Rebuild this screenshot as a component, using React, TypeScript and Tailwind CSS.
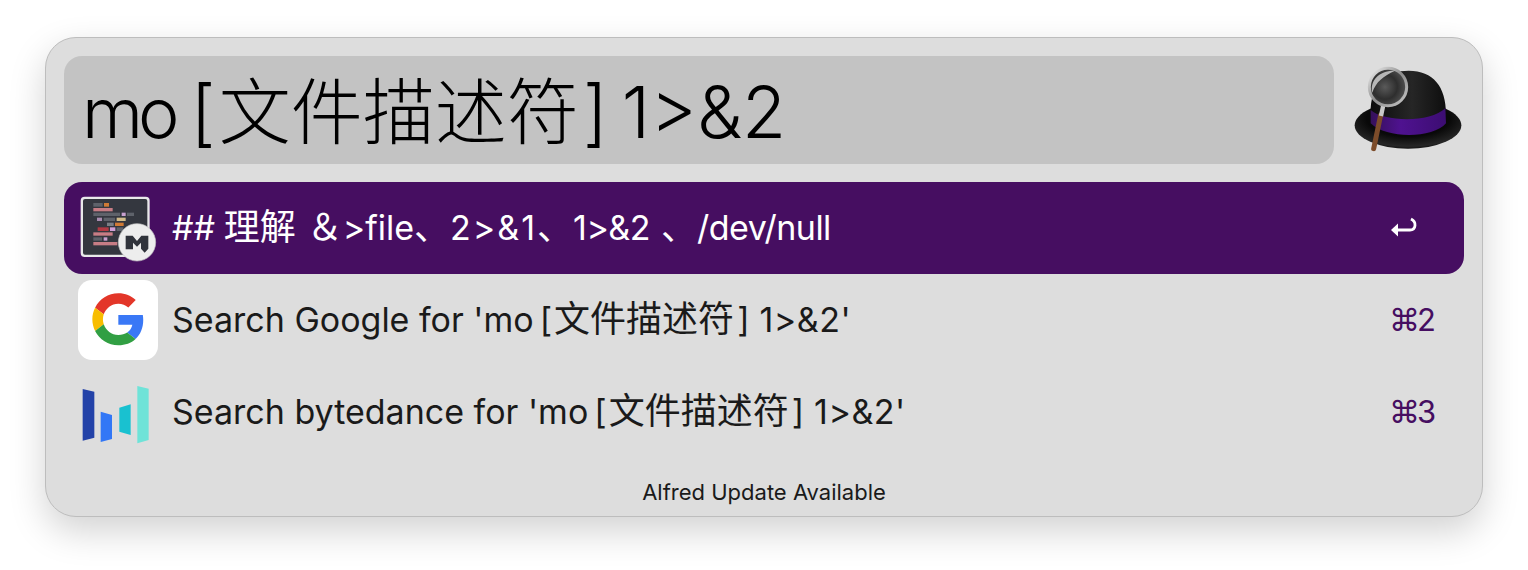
const FONT = "font-['Inter','Noto_Sans_CJK_SC',sans-serif]";

function Hat() {
  return (
    <svg width="114" height="108" viewBox="60 48 342 324" className="shrink-0 ml-[16px] overflow-visible">
      <defs>
        <linearGradient id="dome" x1="0" x2="1" y1="0" y2="0">
          <stop offset="0" stopColor="#0b0b0b" />
          <stop offset="0.55" stopColor="#262626" />
          <stop offset="1" stopColor="#0e0e0e" />
        </linearGradient>
        <radialGradient id="brim" cx="0.5" cy="0.35" r="0.65">
          <stop offset="0.6" stopColor="#090909" />
          <stop offset="0.92" stopColor="#262626" />
          <stop offset="1" stopColor="#141414" />
        </radialGradient>
        <linearGradient id="band" x1="0" x2="1" y1="0" y2="0">
          <stop offset="0" stopColor="#35105a" />
          <stop offset="0.4" stopColor="#4f1290" />
          <stop offset="1" stopColor="#3c0d72" />
        </linearGradient>
        <radialGradient id="lens" cx="0.42" cy="0.5" r="0.6">
          <stop offset="0" stopColor="#5a5a5a" />
          <stop offset="0.55" stopColor="#2e2e2e" />
          <stop offset="1" stopColor="#555" />
        </radialGradient>
        <linearGradient id="ring" x1="0" x2="1" y1="0" y2="1">
          <stop offset="0" stopColor="#f0f0f0" />
          <stop offset="0.5" stopColor="#8c8c8c" />
          <stop offset="1" stopColor="#c8c8c8" />
        </linearGradient>
      </defs>
      <ellipse cx="234" cy="256" rx="160" ry="70" fill="url(#brim)" />
      <path d="M122 222 C120 130 170 92 236 92 C310 92 348 140 348 222 C348 262 122 262 122 222 Z" fill="url(#dome)" />
      <path d="M122 210 C160 245 300 250 346 205 L348 250 C310 296 170 298 122 250 Z" fill="url(#band)" />
      <path d="M152 225 L131 326" stroke="#7d4c2a" strokeWidth="15" strokeLinecap="round" />
      <path d="M160 195 L153 228" stroke="#c9c9c9" strokeWidth="13" />
      <circle cx="174" cy="141" r="56" fill="url(#lens)" stroke="url(#ring)" strokeWidth="9" />
      <path d="M127 158 C118 120 150 90 195 92 C160 108 138 125 127 158 Z" fill="#e4e4e4" opacity="0.75" />
    </svg>
  );
}

function MWeb() {
  return (
    <svg width="80" height="80" viewBox="54 24 240 240" className="shrink-0">
      <rect x="62" y="50" width="207" height="181" rx="12" fill="#e9e9ea" />
      <rect x="69" y="57" width="193" height="167" rx="6" fill="#34373f" />
      <rect x="100" y="69" width="28" height="11" fill="#5e626a" />
      <rect x="132" y="69" width="15" height="11" fill="#cf7a35" />
      <rect x="100" y="84" width="58" height="10" fill="#c77d85" />
      <rect x="100" y="98" width="80" height="10" fill="#5e626a" />
      <rect x="185" y="98" width="12" height="10" fill="#c7a0cf" />
      <rect x="201" y="98" width="21" height="10" fill="#5e626a" />
      <rect x="111" y="113" width="15" height="10" fill="#a98cb0" />
      <rect x="131" y="113" width="34" height="10" fill="#5e626a" />
      <rect x="170" y="113" width="27" height="10" fill="#d1bc8a" />
      <rect x="141" y="128" width="20" height="10" fill="#7a7e85" />
      <rect x="165" y="128" width="26" height="10" fill="#cf7a35" />
      <rect x="113" y="142" width="33" height="11" fill="#b23a44" />
      <rect x="150" y="142" width="16" height="11" fill="#cf9fd6" />
      <rect x="170" y="142" width="20" height="11" fill="#5e626a" />
      <rect x="100" y="157" width="58" height="10" fill="#c77d85" />
      <rect x="100" y="172" width="26" height="10" fill="#5e626a" />
      <rect x="131" y="172" width="11" height="10" fill="#c7a0cf" />
      <rect x="100" y="186" width="72" height="10" fill="#c77d85" />
      <circle cx="231" cy="187" r="56" fill="#ededed" stroke="#c4c4c4" strokeWidth="2" />
      <path d="M197 167 H218 L231 183 L244 167 H265 V206 L254 218 L243 206 V188 L231 200 L219 188 V208 H197 Z" fill="#30333b" />
    </svg>
  );
}

function GoogleIcon() {
  return (
    <div className="w-[80px] h-[80px] rounded-[14px] bg-white shrink-0">
      <svg width="80" height="80" viewBox="54 15 240 240">
        <g transform="translate(97,55) scale(3.25)">
          <path fill="#e33629" d="M24 9.5c3.54 0 6.71 1.22 9.21 3.6l6.85-6.85C35.9 2.38 30.47 0 24 0 14.62 0 6.51 5.38 2.56 13.22l7.98 6.19C12.43 13.72 17.74 9.5 24 9.5z" />
          <path fill="#3a78f6" d="M46.98 24.55c0-1.57-.15-3.09-.38-4.55H24v9.02h12.94c-.58 2.96-2.26 5.48-4.78 7.18l7.73 6c4.51-4.18 7.09-10.36 7.09-17.65z" />
          <path fill="#f8bd00" d="M10.53 28.59c-.48-1.45-.76-2.99-.76-4.59s.27-3.14.76-4.59l-7.98-6.19C.92 16.46 0 20.12 0 24c0 3.88.92 7.54 2.56 10.78l7.97-6.19z" />
          <path fill="#319f43" d="M24 48c6.48 0 11.93-2.13 15.89-5.81l-7.73-6c-2.15 1.45-4.92 2.3-8.16 2.3-6.26 0-11.57-4.22-13.47-9.91l-7.98 6.19C6.51 42.62 14.62 48 24 48z" />
        </g>
      </svg>
    </div>
  );
}

function BarsIcon() {
  return (
    <svg width="80" height="80" viewBox="54 291 240 240" className="shrink-0">
      <polygon points="68,342 103,350 103,488 68,497" fill="#2342a8" />
      <polygon points="122,410 156,420 156,492 122,501" fill="#3277f6" />
      <polygon points="178,398 212,388 212,480 178,470" fill="#19c1d0" />
      <polygon points="232,333 266,341 266,495 232,505" fill="#6fe3d8" />
    </svg>
  );
}

function Row({ icon, children, right, selected }: { icon: React.ReactNode; children: React.ReactNode; right: React.ReactNode; selected?: boolean }) {
  return (
    <div className={`h-[92px] flex items-center pl-[14px] pr-[28px] rounded-[18px] ${selected ? "bg-[#460e61] text-white" : "text-[#1a1a1a]"}`}>
      {icon}
      <div className="ml-[14px] pb-[2px] flex-1 text-[34px] leading-[40px] whitespace-pre">{children}</div>
      <div className="w-[46px] shrink-0">{right}</div>
    </div>
  );
}

function Query() {
  return (
    <>
      <span className="ml-[6px]">[</span>
      <span className="text-[36px] ml-[2px]">文件描述符</span>
      <span className="ml-[3px]">]</span>
      <span className="ml-[10px] tracking-[0.5px]">1&gt;&amp;2'</span>
    </>
  );
}

function Shortcut({ n }: { n: string }) {
  return (
    <div className="text-[#460e61] text-[31px] leading-[40px] whitespace-nowrap flex items-center">
      <span className="font-['DejaVu_Sans'] text-[31px] leading-[40px] -ml-[1px]">⌘</span>
      <span className="-ml-[3px]">{n}</span>
    </div>
  );
}

export default function App() {
  return (
    <div className={`w-[1528px] h-[570px] bg-white pt-[37px] pl-[45px] overflow-hidden ${FONT}`}>
      <div className="w-[1438px] h-[480px] rounded-[31px] bg-[#dddddd] border border-[#bdbdbd] shadow-[0_14px_36px_rgba(0,0,0,0.18)] pt-[18px] px-[18px]">
        <div className="flex items-center">
          <div className="w-[1270px] h-[108px] rounded-[18px] bg-[#c3c3c3] pl-[18px] pt-[4px] text-[72px] leading-[104px] font-light text-black whitespace-pre">
            <span className="text-[70px] tracking-[-5px]">mo</span>
            <span className="ml-[16px]">[</span>
            <span className="ml-[3px]">文件描述符</span>
            <span className="ml-[4px]">]</span>
            <span className="ml-[14px]">1&gt;&amp;2</span>
          </div>
          <Hat />
        </div>
        <div className="mt-[18px]">
          <Row
            selected
            icon={<MWeb />}
            right={
              <svg width="28" height="24" viewBox="0 0 28 24">
                <path d="M1 14 L8 7.5 V20.5 Z" fill="#fff" />
                <path d="M7 14 H20 C26 14 27 6 21 3" fill="none" stroke="#fff" strokeWidth="2.8" />
              </svg>
            }
          >
            <span>## </span>
            <span className="text-[36px] -ml-[1px]">理解</span>
            <span className="text-[36px] ml-[11px]">＆</span>
            <span>&gt;file</span>
            <span className="text-[36px]">、</span>
            <span className="tracking-[2px]">2&gt;&amp;1</span>
            <span className="text-[36px]">、</span>
            <span className="tracking-[-0.5px]">1&gt;&amp;2</span>
            <span className="text-[36px] ml-[11px]">、</span>
            <span className="tracking-[-0.5px]">/dev/null</span>
          </Row>
          <Row icon={<GoogleIcon />} right={<Shortcut n="2" />}>
            Search Google for 'mo<Query />
          </Row>
          <Row icon={<BarsIcon />} right={<Shortcut n="3" />}>
            Search bytedance for 'mo<Query />
          </Row>
        </div>
        <div className="mt-[20px] text-center text-[22px] leading-[28px] text-[#1a1a1a]">Alfred Update Available</div>
      </div>
    </div>
  );
}
